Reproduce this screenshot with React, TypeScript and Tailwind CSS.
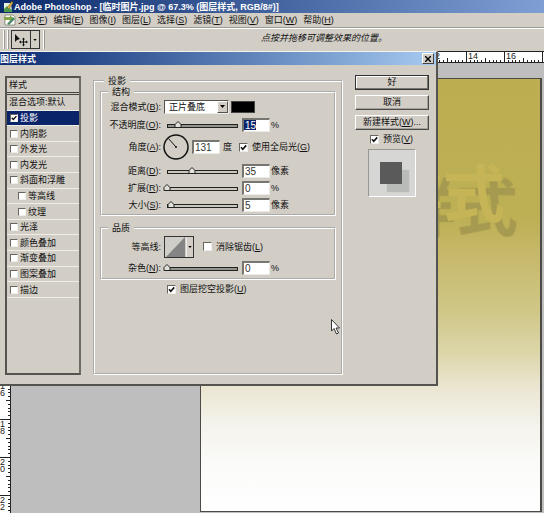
import { useState, type ReactNode } from "react";

const MENUS: [string, string][] = [
  ["文件", "F"],
  ["编辑", "E"],
  ["图像", "I"],
  ["图层", "L"],
  ["选择", "S"],
  ["滤镜", "T"],
  ["视图", "V"],
  ["窗口", "W"],
  ["帮助", "H"],
];

const EFFECTS = [
  { name: "投影", nested: false },
  { name: "内阴影", nested: false },
  { name: "外发光", nested: false },
  { name: "内发光", nested: false },
  { name: "斜面和浮雕", nested: false },
  { name: "等高线", nested: true },
  { name: "纹理", nested: true },
  { name: "光泽", nested: false },
  { name: "颜色叠加", nested: false },
  { name: "渐变叠加", nested: false },
  { name: "图案叠加", nested: false },
  { name: "描边", nested: false },
];

function Key({ k }: { k: string }) {
  return (
    <>
      (<u className="underline-offset-1">{k}</u>)
    </>
  );
}

function Check({ id, on = false, small = false }: { id: string; on?: boolean; small?: boolean }) {
  const [checked, setChecked] = useState(on);
  return (
    <span className={small ? "relative block size-2 shrink-0" : "relative block size-[9px] shrink-0"}>
      <input
        id={id}
        type="checkbox"
        checked={checked}
        onChange={(e) => setChecked(e.target.checked)}
        className="block size-full appearance-none border border-t-[#66645f] border-l-[#66645f] border-r-[#efede8] border-b-[#efede8] bg-white"
      />
      {checked && (
        <svg viewBox="0 0 9 9" className="pointer-events-none absolute inset-0 size-full" fill="none" stroke="#111" strokeWidth="1.6">
          <path d="M2 4.2 3.8 6.2 7.2 2.4" />
        </svg>
      )}
    </span>
  );
}

function Row({ label, k, htmlFor, className, children }: { label: string; k?: string; htmlFor: string; className: string; children: ReactNode }) {
  return (
    <div className={"flex items-center " + className}>
      <label htmlFor={htmlFor} className="w-[60px] shrink-0 pr-px text-right whitespace-nowrap">
        {label}
        {k && <Key k={k} />}:
      </label>
      {children}
    </div>
  );
}

function NumberBox({ id, value, selected = false, label }: { id: string; value: string; selected?: boolean; label: string }) {
  return (
    <span className="relative block h-[14px] w-7 shrink-0">
      <input
        id={id}
        aria-label={label}
        defaultValue={value}
        className={
          "block size-full border-t-2 border-l-2 border-r border-b border-t-[#77756f] border-l-[#77756f] border-r-[#eceae5] border-b-[#eceae5] bg-white pl-px text-[10px] leading-[10px] outline-none " +
          (selected ? "bg-[linear-gradient(#0a246a,#0a246a)] bg-[length:12px_10px] bg-no-repeat text-white" : "text-[#333]")
        }
      />
    </span>
  );
}

function Slider({ id, label, at, solid = false }: { id: string; label: string; at: number; solid?: boolean }) {
  const [value, setValue] = useState(at);
  const x = 4 + value;
  return (
    <span className="relative ml-[1px] block h-3 w-[79px] shrink-0">
      <svg viewBox="0 0 79 12" className="block h-3 w-[79px]">
        <rect x="4.5" y="5.5" width="70" height="3" fill={solid ? "#93948d" : "#c9c7c0"} stroke="#22221f" />
        <path d={`M${x - 3} 8.5V5.5L${x} 2.5L${x + 3} 5.5V8.5Z`} fill="#e4e2dc" stroke="#22221f" />
      </svg>
      <input
        id={id}
        aria-label={label}
        type="range"
        min={0}
        max={70}
        value={value}
        onChange={(e) => setValue(Number(e.target.value))}
        className="absolute inset-0 size-full opacity-0"
      />
    </span>
  );
}

function PushButton({ primary = false, children }: { primary?: boolean; children: ReactNode }) {
  return (
    <button
      className={
        "h-[15px] w-full border text-center leading-[13px] whitespace-nowrap " +
        (primary
          ? "border-[#333] shadow-[inset_-1px_-1px_0_#77756f,inset_1px_1px_0_#fff]"
          : "border-t-white border-l-white border-r-[#4d4b47] border-b-[#4d4b47] shadow-[inset_-1px_-1px_0_#a3a19b]")
      }
    >
      {children}
    </button>
  );
}

function HorizontalRuler() {
  const ticks = Array.from({ length: 144 }, (_, i) => i);
  return (
    <svg className="block h-3 w-full shrink-0 bg-white" stroke="#222" fontSize="9">
      <path d="M0 .5H2000M0 11.5H2000" />
      {ticks.map((i) => {
        const x = Math.round(200 + (i * 38) / 10) + 0.5;
        return <path key={i} d={`M${x} ${i % 10 === 0 ? 0 : i % 5 === 0 ? 7 : 9}V12`} />;
      })}
      {[12, 14, 16].map((n) => (
        <text key={n} x={200 + n * 19 + 2} y="8" stroke="none" fill="#222">
          {n}
        </text>
      ))}
    </svg>
  );
}

function VerticalRuler() {
  const ticks = Array.from({ length: 150 }, (_, i) => i);
  return (
    <svg className="block w-[11px] shrink-0 self-stretch bg-white" stroke="#222" fontSize="9">
      <path d="M10.5 0V2000" />
      {ticks.map((i) => {
        const y = Math.round(14 + (i * 38) / 10) + 0.5;
        return <path key={i} d={`M${i % 10 === 0 ? 0 : i % 5 === 0 ? 6 : 8} ${y}H11`} />;
      })}
      {[16, 18, 20, 22].map((n) => (
        <text key={n} y={14 + n * 19 + 8} stroke="none" fill="#222">
          <tspan x="0">{Math.floor(n / 10)}</tspan>
          <tspan x="0" dy="7">
            {n % 10}
          </tspan>
        </text>
      ))}
    </svg>
  );
}

function StyleList() {
  return (
    <div className="flex w-[76px] shrink-0 flex-col border-2 border-[#55534f] border-r-[#6d6b66]">
      <div className="h-[15px] border-b border-[#44423f] pl-[2px] leading-[15px]">样式</div>
      <ul className="mt-px flex h-[204px] flex-col border-t border-[#44423f]">
        <li className="flex flex-1 items-center border-b border-[#efede8] pl-[2px]">混合选项:默认</li>
        {EFFECTS.map((e, i) => (
          <li
            key={e.name}
            className={
              "flex flex-1 items-center gap-[2px] border-b border-[#efede8] " +
              (e.nested ? "pl-[11px] " : "pl-[3px] ") +
              (i === 0 ? "bg-[#0a246a] text-white" : "")
            }
          >
            <Check id={"fx" + i} on={i === 0} small />
            <label htmlFor={"fx" + i}>{e.name}</label>
          </li>
        ))}
      </ul>
    </div>
  );
}

const GROUP = "min-w-0 border-2 border-white [border-style:groove]";

function ShadowPanel() {
  return (
    <fieldset className={GROUP + " ml-3 w-[250px] shrink-0 px-[5px] pt-px"}>
      <legend className="ml-1 h-[10px] px-1 leading-[10px]">投影</legend>

      <fieldset className={GROUP + " pb-px"}>
        <legend className="ml-[6px] h-[10px] px-1 leading-[10px]">结构</legend>
        <Row label="混合模式" k="B" htmlFor="blend" className="h-[19px]">
          <span className="relative ml-[2px] block h-[14px] w-[65px]">
            <select
              id="blend"
              className="block size-full appearance-none border border-t-[#55534f] border-l-[#55534f] border-r-[#efede8] border-b-[#efede8] bg-white pl-1 leading-[12px]"
            >
              <option>正片叠底</option>
            </select>
            <span className="pointer-events-none absolute top-px right-px flex h-3 w-[11px] items-center justify-center border border-t-white border-l-white border-r-[#55534f] border-b-[#55534f] bg-[#d2cec6]">
              <svg viewBox="0 0 5 3" className="h-[3px] w-[5px]">
                <path d="M0 0H5L2.5 3Z" />
              </svg>
            </span>
          </span>
          <button aria-label="阴影颜色" className="ml-[2px] h-3 w-6 border border-[#444] bg-black" />
        </Row>
        <Row label="不透明度" k="O" htmlFor="opacity" className="h-[18px]">
          <Slider id="opacity" label="不透明度滑块" at={11} solid />
          <NumberBox id="opacity-n" label="不透明度" value="15" selected />
          <span className="ml-px">%</span>
        </Row>
        <Row label="角度" k="A" htmlFor="angle" className="mb-[2px] h-[26px]">
          <svg viewBox="0 0 26 26" className="ml-px size-[26px] shrink-0" fill="none" stroke="#111">
            <circle cx="13" cy="13" r="12" strokeWidth="1.5" />
            <path d="M13 13 5.5 4.5" />
            <circle cx="13" cy="13" r="1" fill="#111" stroke="none" />
          </svg>
          <span className="ml-[3px]">
            <NumberBox id="angle" label="角度" value="131" />
          </span>
          <span className="mr-[7px] ml-[3px]">度</span>
          <Check id="global" on />
          <label htmlFor="global" className="ml-1 whitespace-nowrap">
            使用全局光
            <Key k="G" />
          </label>
        </Row>
        <Row label="距离" k="D" htmlFor="distance" className="h-[17px]">
          <Slider id="distance" label="距离滑块" at={25} />
          <NumberBox id="distance-n" label="距离" value="35" />
          <span className="ml-px">像素</span>
        </Row>
        <Row label="扩展" k="R" htmlFor="spread" className="h-[17px]">
          <Slider id="spread" label="扩展滑块" at={0} />
          <NumberBox id="spread-n" label="扩展" value="0" />
          <span className="ml-px">%</span>
        </Row>
        <Row label="大小" k="S" htmlFor="size" className="h-[17px]">
          <Slider id="size" label="大小滑块" at={4} />
          <NumberBox id="size-n" label="大小" value="5" />
          <span className="ml-px">像素</span>
        </Row>
      </fieldset>

      <fieldset className={GROUP + " mt-[7px] pb-[2px]"}>
        <legend className="ml-[6px] h-[10px] px-1 leading-[10px]">品质</legend>
        <Row label="等高线" htmlFor="contour" className="h-[27px]">
          <button id="contour" aria-label="等高线" className="ml-[2px] flex h-[22px] w-[30px] shrink-0 border border-[#333]">
            <svg viewBox="0 0 21 20" className="h-5 w-[21px] bg-[#cfcdc8]">
              <path d="M1 20 20 0V20Z" fill="#848484" />
            </svg>
            <span className="flex h-full flex-1 items-center justify-center border-l border-[#eee]">
              <svg viewBox="0 0 5 3" className="h-[2px] w-1">
                <path d="M0 0H5L2.5 3Z" />
              </svg>
            </span>
          </button>
          <span className="ml-[9px]">
            <Check id="alias" />
          </span>
          <label htmlFor="alias" className="ml-1">
            消除锯齿
            <Key k="L" />
          </label>
        </Row>
        <Row label="杂色" k="N" htmlFor="noise" className="h-4">
          <Slider id="noise" label="杂色滑块" at={0} solid />
          <NumberBox id="noise-n" label="杂色" value="0" />
          <span className="ml-px">%</span>
        </Row>
      </fieldset>

      <div className="mt-1 flex h-[10px] items-center pl-[67px]">
        <Check id="knock" on />
        <label htmlFor="knock" className="ml-1">
          图层挖空投影
          <Key k="U" />
        </label>
      </div>
    </fieldset>
  );
}

function StyleDialog() {
  return (
    <section
      role="dialog"
      aria-label="图层样式"
      className="absolute top-[51px] left-0 w-[438px] border-t border-r-2 border-b-2 border-t-[#f4f2ee] border-r-[#55534f] border-b-[#55534f] bg-[#d2cec6]"
    >
      <header className="flex h-[13px] items-center justify-between bg-linear-to-r from-[#0d2b72] to-[#a6caf0] pr-[2px] text-white">
        <h2 className="text-[9px] font-bold">图层样式</h2>
        <button
          aria-label="关闭"
          className="flex h-[11px] w-3 items-center justify-center border border-t-white border-l-white border-r-[#444] border-b-[#444] bg-[#d2cec6]"
        >
          <svg viewBox="0 0 6 6" className="size-[6px]" stroke="#000" strokeWidth="1.4">
            <path d="M0 0 6 6M6 0 0 6" />
          </svg>
        </button>
      </header>
      <div className="flex pb-[9px] pl-[5px]">
        <div className="mt-[11px] flex h-[299px]">
          <StyleList />
          <ShadowPanel />
        </div>
        <div className="mt-[10px] ml-3 flex w-[74px] flex-col gap-[5px]">
          <PushButton primary>好</PushButton>
          <PushButton>取消</PushButton>
          <PushButton>
            新建样式
            <Key k="W" />
            ...
          </PushButton>
          <div className="-mt-px flex h-[10px] items-center gap-1 pl-[15px]">
            <Check id="preview" on />
            <label htmlFor="preview">
              预览
              <Key k="V" />
            </label>
          </div>
          <div className="ml-[13px] size-[48px] border border-t-[#99978f] border-l-[#99978f] border-r-white border-b-white bg-[#d6d6d5] pt-3 pl-[11px]">
            <div className="size-[22px] bg-[#5a5a5a] shadow-[7px_8px_1px_#b9bbb8]" />
          </div>
        </div>
      </div>
    </section>
  );
}

export default function App() {
  return (
    <div className="relative flex h-screen flex-col overflow-hidden bg-[#bebebe] font-['Liberation_Sans','Noto_Sans_CJK_SC',sans-serif] text-[9px] leading-[12px] text-[#111]">
      <header className="flex h-[13px] shrink-0 items-center gap-px bg-linear-to-r from-[#0d2b6c] to-[#7f9fd4] pl-[3px] text-white">
        <svg viewBox="0 0 10 12" className="h-3 w-[10px]">
          <path d="M1 2H8L9 11H1Z" fill="#e9f0e0" />
          <path d="M1 8 4 5 9 9V11H1Z" fill="#4c9a4a" />
          <path d="M4 7 9 0 10 2 6 8Z" fill="#e5b63c" stroke="#3d3524" strokeWidth=".4" />
        </svg>
        <h1 className="text-[9px] font-bold whitespace-nowrap">
          Adobe Photoshop - [临时图片.jpg @ 67.3% (图层样式, RGB/8#)]
        </h1>
      </header>

      <nav className="flex h-[15px] shrink-0 items-center gap-[6px] border-b border-[#9b9993] bg-[#d2cec6] pl-1 whitespace-nowrap">
        <svg viewBox="0 0 12 12" className="-mr-1 h-3 w-3">
          <path d="M1 1H9L11 3V11H1Z" fill="#fff" stroke="#67705e" strokeWidth=".7" />
          <path d="M0 3H6V1L10 5 6 8V6H0Z" fill="#86a746" />
          <path d="M3 10 9 3 11 5 5 11Z" fill="#4f8b62" />
        </svg>
        {MENUS.map(([name, k]) => (
          <button key={k}>
            {name}
            <Key k={k} />
          </button>
        ))}
      </nav>

      <div className="flex h-[23px] shrink-0 items-start border-t border-white bg-[#d2cec6] pl-[3px]">
        <div className="mt-px flex h-[19px] items-center gap-[2px]">
          <span className="h-full w-[2px] border-r border-l border-l-white border-r-[#99978f]" />
          <span className="h-full w-[2px] border-r border-l border-l-white border-r-[#99978f]" />
          <button aria-label="移动工具" className="flex h-[19px] w-[29px] border border-[#333]">
            <svg viewBox="0 0 18 17" className="h-[17px] w-[18px]">
              <path d="M3 3V11L5 9 8 8Z" fill="#111" />
              <path d="M11.5 8V14M8.500 11H14.500" stroke="#111" />
              <path d="M10 8.500H13L11.500 6.500ZM10 13.500H13L11.500 15.500ZM9 9.500V12.500L7 11ZM14 9.500V12.500L16 11Z" fill="#111" />
            </svg>
            <span className="flex h-full flex-1 items-center justify-center border-l border-[#333]">
              <svg viewBox="0 0 5 3" className="h-[2px] w-1">
                <path d="M0 0H5L2.500 3Z" />
              </svg>
            </span>
          </button>
          <span className="ml-px h-full w-[2px] border-r border-l border-l-white border-r-[#99978f]" />
        </div>
        <p className="mt-[3px] flex-1 pl-[216px] whitespace-nowrap italic">点按并拖移可调整效果的位置。</p>
      </div>

      <main className="flex min-h-0 flex-1 flex-col">
        <HorizontalRuler />
        <div className="flex min-h-0 flex-1">
          <VerticalRuler />
          <div className="flex min-w-0 flex-1 pt-[15px] pr-[2px] pb-px pl-[189px]">
            <div className="relative flex-1 overflow-hidden border border-r-2 border-[#4b4a45] bg-[linear-gradient(#bcae50_0%,#bdaf54_32%,#c8bb70_43%,#d0c788_54%,#dcd5a8_63%,#eae5d0_71%,#f4f3ec_80%,#fbfbfa_90%,#fff_100%)]">
              <p className="absolute top-[84px] left-[180px] text-[62px] leading-[66px] font-bold whitespace-nowrap text-[#c5b556] [text-shadow:13px_14px_1px_#a59a50]">
                样式
              </p>
            </div>
          </div>
        </div>
      </main>

      <StyleDialog />

      <svg viewBox="0 0 10 16" className="pointer-events-none absolute top-[319px] left-[331px] h-4 w-[10px]">
        <path d="M.5 .5V12L3 9.500 5.500 15 7.500 14 5 9H8.500Z" fill="#fff" stroke="#222" strokeWidth=".9" />
      </svg>
    </div>
  );
}
